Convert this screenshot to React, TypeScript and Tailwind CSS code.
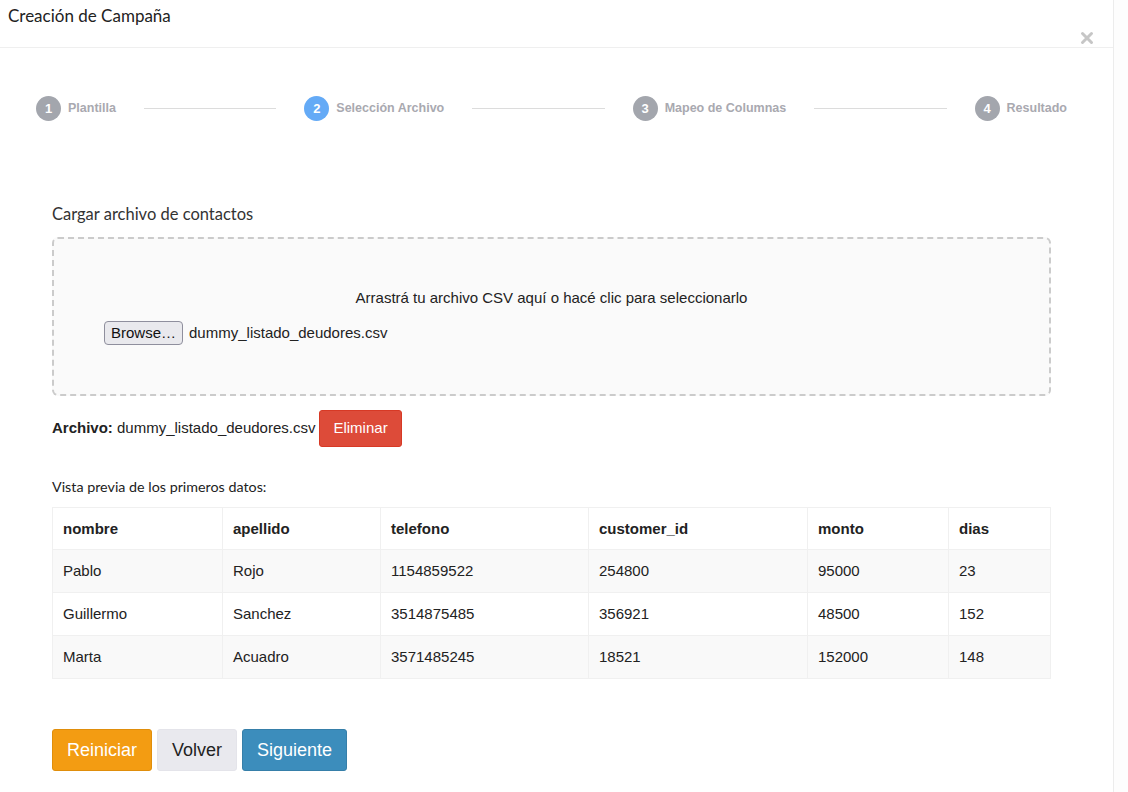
const steps = [
  { n: 1, label: "Plantilla", active: false },
  { n: 2, label: "Selección Archivo", active: true },
  { n: 3, label: "Mapeo de Columnas", active: false },
  { n: 4, label: "Resultado", active: false },
];

const columns = ["nombre", "apellido", "telefono", "customer_id", "monto", "dias"];
const colWidths = ["w-[170px]", "w-[158px]", "w-[208px]", "w-[219px]", "w-[141px]", ""];

const rows = [
  ["Pablo", "Rojo", "1154859522", "254800", "95000", "23"],
  ["Guillermo", "Sanchez", "3514875485", "356921", "48500", "152"],
  ["Marta", "Acuadro", "3571485245", "18521", "152000", "148"],
];

const Step = ({ n, label, active }: { n: number; label: string; active: boolean }) => (
  <div className="flex items-center gap-[7px] shrink-0">
    <span
      className={`flex h-[25px] w-[25px] items-center justify-center rounded-full text-[13px] font-bold text-white ${
        active ? "bg-[#64aaf6]" : "bg-[#a3a6ad]"
      }`}
    >
      {n}
    </span>
    <span className="text-[12.5px] font-bold text-[#a9a9b0]">{label}</span>
  </div>
);

export default function App() {
  return (
    <div className="flex min-h-[792px] bg-white font-['Liberation_Sans',Arial,sans-serif] text-[#222]">
      <div className="w-[1114px] shrink-0 border-r border-[#ececec]">
        <div className="flex h-[48px] justify-between border-b border-[#efefef] pl-[8px] pr-[19px]">
          <h1 className="pt-[4px] font-['Lato',sans-serif] text-[17px] leading-[24px] text-[#222]">
            Creación de Campaña
          </h1>
          <svg className="mb-[2px] self-end" width="14" height="14" viewBox="0 0 14 14">
            <path d="M2.5 2.5 L11.5 11.5 M11.5 2.5 L2.5 11.5" stroke="#c6c6c6" strokeWidth="3" strokeLinecap="round" />
          </svg>
        </div>

        <div className="flex items-center pl-[36px] pr-[46px] pt-[48px]">
          {steps.map((s, i) => (
            <div key={s.n} className="contents">
              <Step {...s} />
              {i < steps.length - 1 && <div className="mx-[28px] h-px flex-1 bg-[#dcdcdc]" />}
            </div>
          ))}
        </div>

        <div className="pl-[52px] pr-[62px] pt-[81px]">
          <h2 className="font-['Lato',sans-serif] text-[16.5px] leading-[24px] text-[#333]">
            Cargar archivo de contactos
          </h2>

          <div className="mt-[11px] rounded-[6px] border-2 border-dashed border-[#cbcbcb] bg-[#fafafa] px-[50px] pb-[49px] pt-[50px]">
            <p className="text-center text-[15px] leading-[18px] text-[#222]">
              Arrastrá tu archivo CSV aquí o hacé clic para seleccionarlo
            </p>
            <div className="mt-[14px] flex items-center gap-[6px]">
              <span className="flex h-[24px] items-center rounded-[4px] border border-[#8f8f9d] bg-[#e9e9ed] px-[6px] text-[15px] text-[#111]">
                Browse…
              </span>
              <span className="text-[15px]">dummy_listado_deudores.csv</span>
            </div>
          </div>

          <div className="mt-[14px] flex items-center gap-[4px] text-[15px]">
            <span>
              <b>Archivo:</b> dummy_listado_deudores.csv
            </span>
            <button className="h-[37px] rounded-[3px] border border-[#d73925] bg-[#dd4b39] px-[13px] text-[15px] text-white">
              Eliminar
            </button>
          </div>

          <p className="mt-[30px] font-['Lato',sans-serif] text-[14.3px] leading-[20px] text-[#222]">
            Vista previa de los primeros datos:
          </p>

          <table className="mt-[10px] w-full border-collapse border border-[#f0f0f0] text-[15px]">
            <thead>
              <tr className="h-[42px] bg-white">
                {columns.map((c, i) => (
                  <th key={c} className={`border border-[#f0f0f0] px-[10px] pt-[1px] text-left font-bold ${colWidths[i]}`}>
                    {c}
                  </th>
                ))}
              </tr>
            </thead>
            <tbody>
              {rows.map((r, ri) => (
                <tr key={ri} className={`h-[43px] ${ri % 2 === 0 ? "bg-[#f9f9f9]" : "bg-white"}`}>
                  {r.map((v, ci) => (
                    <td key={ci} className="border border-[#f0f0f0] px-[10px] pt-[1px]">
                      {v}
                    </td>
                  ))}
                </tr>
              ))}
            </tbody>
          </table>

          <div className="mt-[50px] flex gap-[5px] pb-[21px]">
            <button className="h-[42px] rounded-[3px] border border-[#e08e0b] bg-[#f39c12] px-[14px] text-[18px] text-white">
              Reiniciar
            </button>
            <button className="h-[42px] rounded-[3px] border border-[#e4e4ea] bg-[#e9e9ee] px-[14px] text-[18px] text-[#222]">
              Volver
            </button>
            <button className="h-[42px] rounded-[3px] border border-[#367fa9] bg-[#3c8dbc] px-[14px] text-[18px] text-white">
              Siguiente
            </button>
          </div>
        </div>
      </div>
      <div className="flex-1 bg-[#fdfdfd]" />
    </div>
  );
}
